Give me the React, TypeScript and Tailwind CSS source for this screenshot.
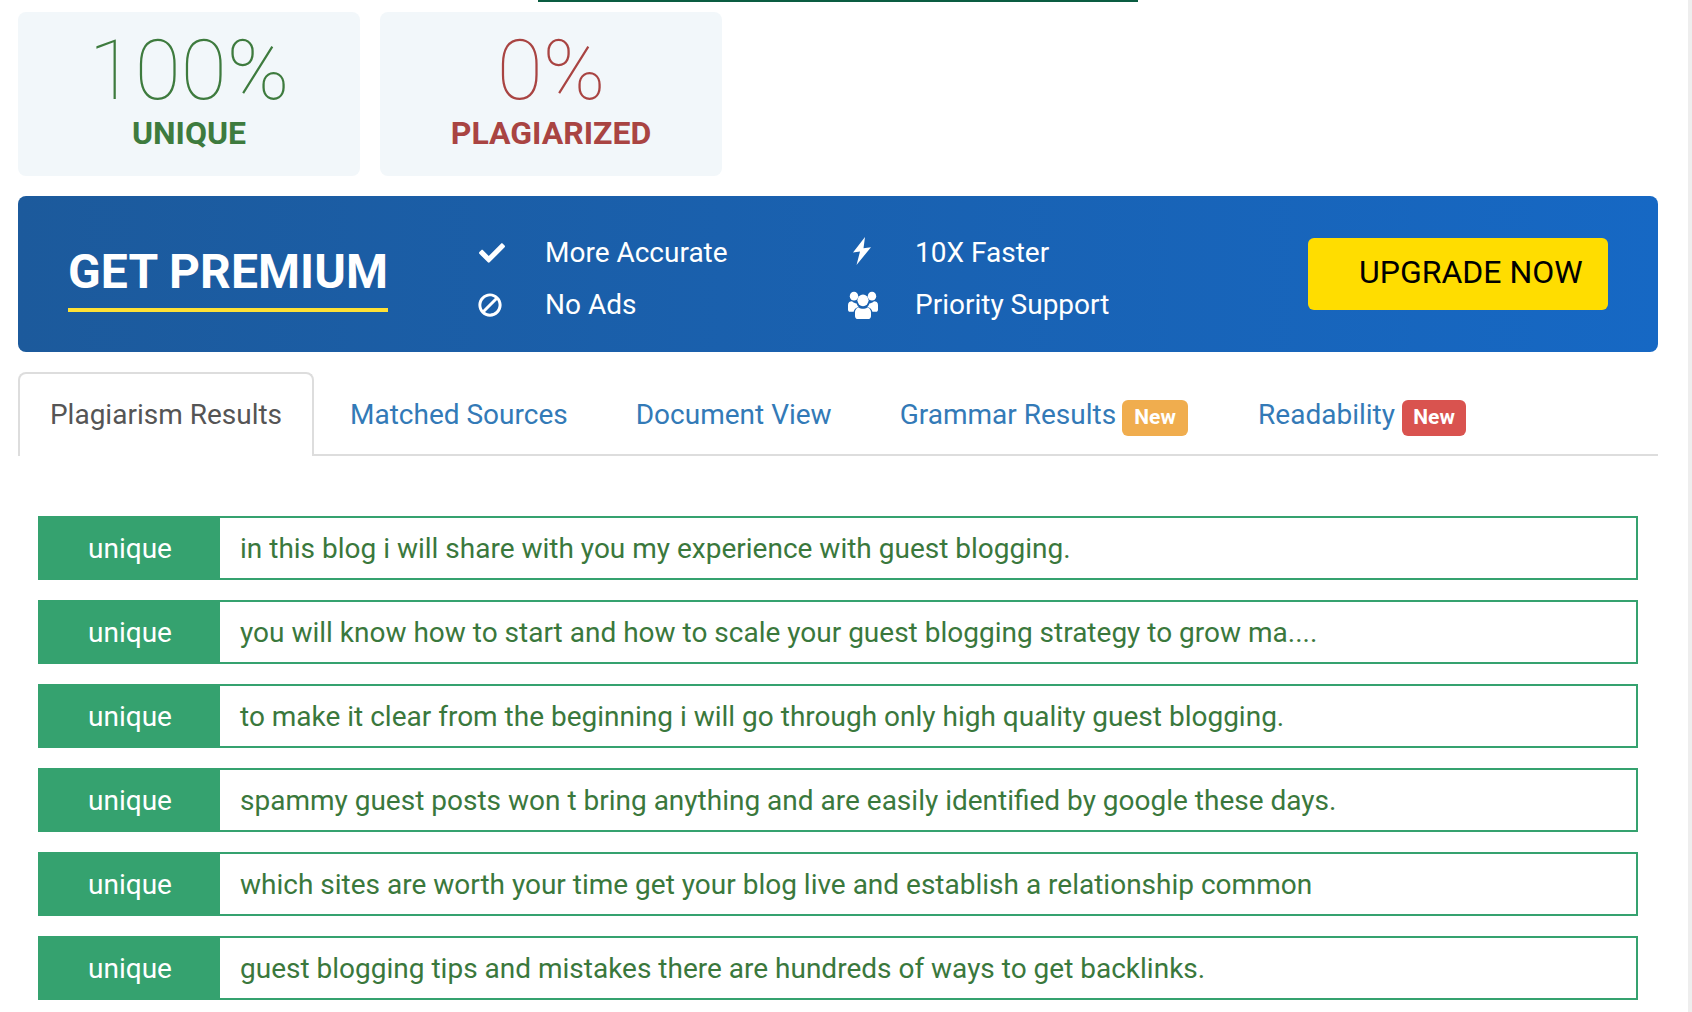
import { FaCheck, FaBan } from "react-icons/fa";

const rows = [
  "in this blog i will share with you my experience with guest blogging.",
  "you will know how to start and how to scale your guest blogging strategy to grow ma....",
  "to make it clear from the beginning i will go through only high quality guest blogging.",
  "spammy guest posts won t bring anything and are easily identified by google these days.",
  "which sites are worth your time get your blog live and establish a relationship common",
  "guest blogging tips and mistakes there are hundreds of ways to get backlinks.",
];

function ScoreCard({ value, label, color }: { value: string; label: string; color: string }) {
  return (
    <div className="w-[342px] h-[164px] rounded-lg bg-[#f2f7fa] flex flex-col items-center">
      <div className={`text-[84px] leading-[90px] mt-[14px] font-thin ${color}`}>{value}</div>
      <div className={`text-[32px] leading-[34px] font-bold ${color}`}>{label}</div>
    </div>
  );
}

function Feature({ icon, text, width }: { icon: React.ReactNode; text: string; width: string }) {
  return (
    <div className={`flex items-center h-[52px] ${width}`}>
      <span className="w-[65px] flex items-center text-white">{icon}</span>
      <span className="text-[28px] text-white">{text}</span>
    </div>
  );
}

function BoltIcon() {
  return (
    <svg width="18" height="28" viewBox="0 0 18 26" preserveAspectRatio="none" className="ml-[3px] mb-[3px]" fill="currentColor">
      <path d="M12 0 L0 14.5 L7 13.5 L3.5 26 L18 9.5 L10.5 10.5 Z" />
    </svg>
  );
}

function UsersIcon() {
  return (
    <svg width="30" height="28" viewBox="0 0 30 27" preserveAspectRatio="none" className="-ml-[2px]" fill="currentColor">
      <circle cx="6" cy="5" r="4.2" />
      <circle cx="24" cy="5" r="4.2" />
      <circle cx="15" cy="9" r="5.6" />
      <path d="M0 13.5 C0 11 2 10 4 10 C5.5 11.5 7 12 8.6 12 C9 13.5 9.8 14.6 10.6 15.4 C7.8 16 6 18 5.6 20 L2 20 C0.8 20 0 19 0 18 Z" />
      <path d="M30 13.5 C30 11 28 10 26 10 C24.5 11.5 23 12 21.4 12 C21 13.5 20.2 14.6 19.4 15.4 C22.2 16 24 18 24.4 20 L28 20 C29.2 20 30 19 30 18 Z" />
      <path d="M7 20.5 C7 18 9 15.8 10.8 15.8 C12 16.8 13.5 17.2 15 17.2 C16.5 17.2 18 16.8 19.2 15.8 C21 15.8 23 18 23 20.5 L23 24 C23 25.8 21.8 27 20 27 L10 27 C8.2 27 7 25.8 7 24 Z" />
    </svg>
  );
}

export default function App() {
  return (
    <div className="w-[1692px] h-[1012px] overflow-hidden bg-white flex font-['Roboto',sans-serif]">
      <div className="w-[1688px] pl-[18px] pr-[30px]">
        <div className="h-[2px] w-[600px] ml-[520px] bg-[#0a5c41]" />

        <div className="flex gap-[20px] mt-[10px]">
          <ScoreCard value="100%" label="UNIQUE" color="text-[#3e7b3e]" />
          <ScoreCard value="0%" label="PLAGIARIZED" color="text-[#a94442]" />
        </div>

        {/* premium banner */}
        <div className="mt-[20px] h-[156px] rounded-lg bg-gradient-to-r from-[#1c5a9c] to-[#1668c4] flex items-center pl-[50px] pr-[50px]">
          <div className="w-[412px] shrink-0 pt-[8px]">
            <div className="inline-block border-b-4 border-[#ffe135] text-[48px] leading-[56px] pb-[8px] font-bold text-white tracking-[0.1px]">
              GET PREMIUM
            </div>
          </div>
          <div className="flex flex-col w-[370px] pt-[9px]">
            <Feature icon={<FaCheck size={26} className="-ml-[1px]" />} text="More Accurate" width="w-full" />
            <Feature icon={<FaBan size={24} className="-scale-x-100 -ml-[2px]" />} text="No Ads" width="w-full" />
          </div>
          <div className="flex flex-col pt-[9px]">
            <Feature icon={<BoltIcon />} text="10X Faster" width="w-[392px]" />
            <Feature icon={<UsersIcon />} text="Priority Support" width="w-[392px]" />
          </div>
          <button className="w-[300px] h-[72px] pb-[4px] rounded-md bg-[#ffdd00] text-black text-[32px] pl-[51px] text-left ml-auto shrink-0">
            UPGRADE NOW
          </button>
        </div>

        {/* tabs */}
        <div className="mt-[20px] h-[84px] border-b-2 border-[#dddddd] flex">
          <div className="w-[296px] h-[84px] rounded-t-lg border-2 border-b-0 border-[#dddddd] bg-white text-[28px] text-[#555555] flex items-center justify-center">
            Plagiarism Results
          </div>
          <div className="flex items-center h-[82px] pt-[4px] text-[28px] text-[#337ab7]">
            <span className="ml-[36px]">Matched Sources</span>
            <span className="ml-[68px]">Document View</span>
            <span className="ml-[68px]">Grammar Results</span>
            <span className="ml-[6px] h-[36px] w-[66px] mt-[6px] rounded-md bg-[#f0ad4e] text-white text-[21px] font-bold flex items-center justify-center">New</span>
            <span className="ml-[70px]">Readability</span>
            <span className="ml-[7px] h-[36px] w-[64px] mt-[6px] rounded-md bg-[#d9534f] text-white text-[21px] font-bold flex items-center justify-center">New</span>
          </div>
        </div>

        {/* results */}
        <div className="mt-[60px] px-[20px] flex flex-col gap-[20px]">
          {rows.map((row, i) => (
            <div key={i} className="flex h-[64px] border-2 border-[#35a26f]">
              <div className="w-[180px] shrink-0 pt-[2px] bg-[#35a26f] text-white text-[28px] flex items-center justify-center">unique</div>
              <div className="pl-[20px] pt-[2px] text-[28px] text-[#3a783c] flex items-center">{row}</div>
            </div>
          ))}
        </div>
      </div>
      <div className="w-[4px] bg-[#eeeeee]" />
    </div>
  );
}
